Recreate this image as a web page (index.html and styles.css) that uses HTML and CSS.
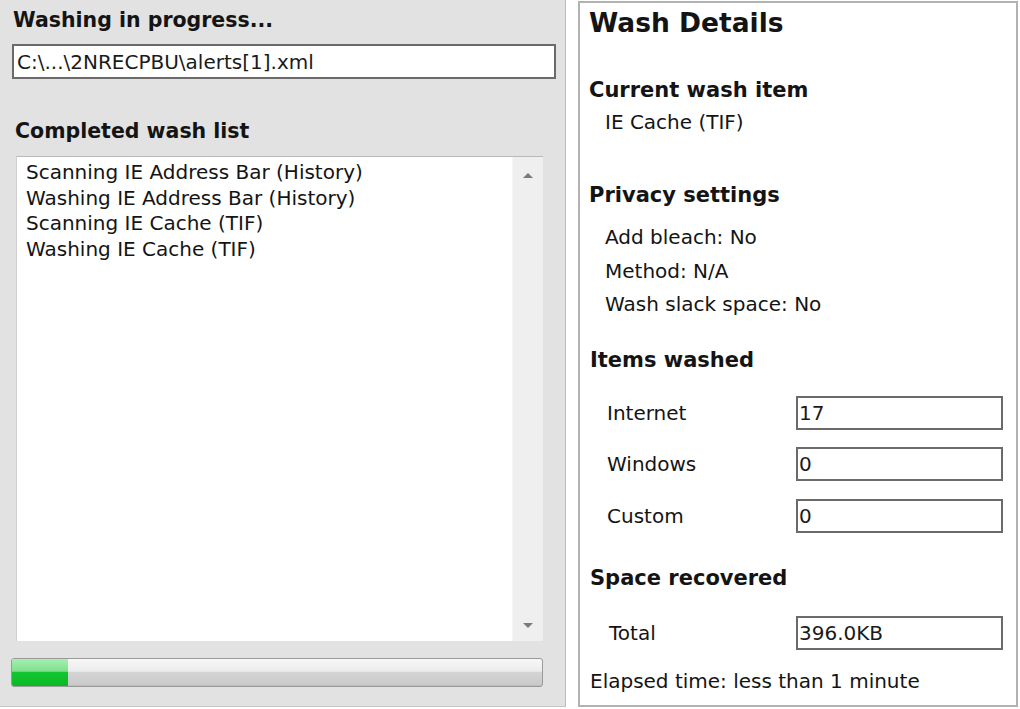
FILE: index.html
```html
<!DOCTYPE html>
<html>
<head>
<meta charset="utf-8">
<link rel="stylesheet" href="styles.css">
</head>
<body>
<div class="app">
  <section class="left">
    <h2 class="lhead first">Washing in progress...</h2>
    <div class="field path">C:\...\2NRECPBU\alerts[1].xml</div>
    <h2 class="lhead second">Completed wash list</h2>
    <div class="list">
      <div class="items">
        <div class="item">Scanning IE Address Bar (History)</div>
        <div class="item">Washing IE Address Bar (History)</div>
        <div class="item">Scanning IE Cache (TIF)</div>
        <div class="item">Washing IE Cache (TIF)</div>
      </div>
      <div class="scrollbar">
        <span class="arrow up"></span>
        <span class="arrow down"></span>
      </div>
    </div>
    <div class="progress"><div class="fill" style="width: 56px"></div></div>
  </section>
  <section class="right">
    <h1 class="title">Wash Details</h1>
    <h3 class="rhead current">Current wash item</h3>
    <div class="val current-val">IE Cache (TIF)</div>
    <h3 class="rhead privacy">Privacy settings</h3>
    <div class="settings">
      <div class="val">Add bleach: No</div>
      <div class="val">Method: N/A</div>
      <div class="val">Wash slack space: No</div>
    </div>
    <h3 class="rhead items-h">Items washed</h3>
    <div class="rows">
      <div class="label">Internet</div><div class="field box">17</div>
      <div class="label">Windows</div><div class="field box">0</div>
      <div class="label">Custom</div><div class="field box">0</div>
    </div>
    <h3 class="rhead space">Space recovered</h3>
    <div class="rows total">
      <div class="label total-label">Total</div><div class="field box">396.0KB</div>
    </div>
    <div class="elapsed">Elapsed time: less than 1 minute</div>
  </section>
</div>
</body>
</html>
```

FILE: styles.css
```css
html, body {
  margin: 0;
  padding: 0;
  background: #ffffff;
}
body {
  width: 1020px;
  height: 709px;
  overflow: hidden;
  font-family: "DejaVu Sans", "Liberation Sans", sans-serif;
  color: #141414;
}
.app {
  display: flex;
  align-items: flex-start;
  width: 1020px;
  height: 709px;
}
.left {
  box-sizing: border-box;
  width: 566px;
  height: 707px;
  background: #e2e2e2;
  border-right: 1px solid #bcbcbc;
  border-bottom: 1px solid #c4c4c4;
  padding: 8px 0 0 12px;
  display: flex;
  flex-direction: column;
  align-items: flex-start;
}
.lhead {
  margin: 0;
  font-size: 20.5px;
  line-height: 24px;
  font-weight: bold;
}
.lhead.first { margin-left: 1px; }
.lhead.second { margin-top: 40px; margin-left: 3px; }
.field {
  box-sizing: border-box;
  background: #ffffff;
  border: 2px solid #6a6a6a;
  font-size: 20px;
  display: flex;
  align-items: center;
  color: #1a1a1a;
  white-space: nowrap;
}
.path {
  margin-top: 12px;
  width: 544px;
  height: 35px;
  padding-left: 3px;
}
.list {
  box-sizing: border-box;
  margin-top: 13px;
  margin-left: 4px;
  width: 527px;
  height: 485px;
  background: #ffffff;
  border-top: 1px solid #b9b9b9;
  border-left: 1px solid #cfcfcf;
  display: flex;
}
.items {
  flex: 1;
  padding: 3px 0 0 9px;
  font-size: 20px;
  line-height: 25.5px;
  white-space: nowrap;
}
.scrollbar {
  width: 31px;
  background: #efefef;
  border-left: 1px solid #f6f6f6;
  display: flex;
  flex-direction: column;
  justify-content: space-between;
  align-items: center;
  padding: 16px 0 13px;
  box-sizing: border-box;
}
.arrow {
  width: 0;
  height: 0;
  border-left: 5px solid transparent;
  border-right: 5px solid transparent;
}
.arrow.up { border-bottom: 5px solid #7a7a7a; }
.arrow.down { border-top: 5px solid #7a7a7a; }
.progress {
  box-sizing: border-box;
  margin-top: 17px;
  margin-left: -1px;
  width: 532px;
  height: 29px;
  border: 1px solid #9a9a9a;
  border-radius: 3px;
  background: linear-gradient(to bottom, #f7f7f7 0%, #ececec 45%, #d4d4d4 50%, #c9c9c9 100%);
  overflow: hidden;
  box-shadow: inset 0 -1px 0 #bdbdbd;
}
.fill {
  height: 100%;
  background: linear-gradient(to bottom, #a6efb0 0%, #7fe18e 45%, #12c630 50%, #0bb826 100%);
}
.right {
  box-sizing: border-box;
  margin-left: 12px;
  margin-top: 1px;
  width: 440px;
  height: 706px;
  border: 2px solid #b2b2b2;
  padding: 4px 0 0 9px;
  display: flex;
  flex-direction: column;
  align-items: flex-start;
}
.title {
  margin: 0;
  font-size: 26.5px;
  line-height: 32px;
  font-weight: bold;
}
.rhead {
  margin: 0;
  font-size: 21px;
  line-height: 24px;
  font-weight: bold;
}
.rhead.current { margin-top: 39px; }
.rhead.privacy { margin-top: 49px; }
.rhead.items-h { margin-top: 26px; margin-left: 1px; }
.rhead.space { margin-top: 33px; margin-left: 1px; }
.val {
  font-size: 20px;
  line-height: 24px;
  padding-left: 16px;
}
.current-val { margin-top: 8px; }
.settings {
  margin-top: 14px;
}
.settings .val { line-height: 33.5px; }
.rows {
  margin-top: 24px;
  display: grid;
  grid-template-columns: 189px 207px;
  row-gap: 17.5px;
  align-items: center;
  padding-left: 18px;
}
.rows.total { margin-top: 26px; }
.label {
  font-size: 20px;
}
.total-label { padding-left: 2px; }
.box {
  height: 34px;
  padding-left: 1px;
}
.elapsed {
  margin-top: 19px;
  margin-left: 1px;
  font-size: 20px;
  line-height: 24px;
}
```
